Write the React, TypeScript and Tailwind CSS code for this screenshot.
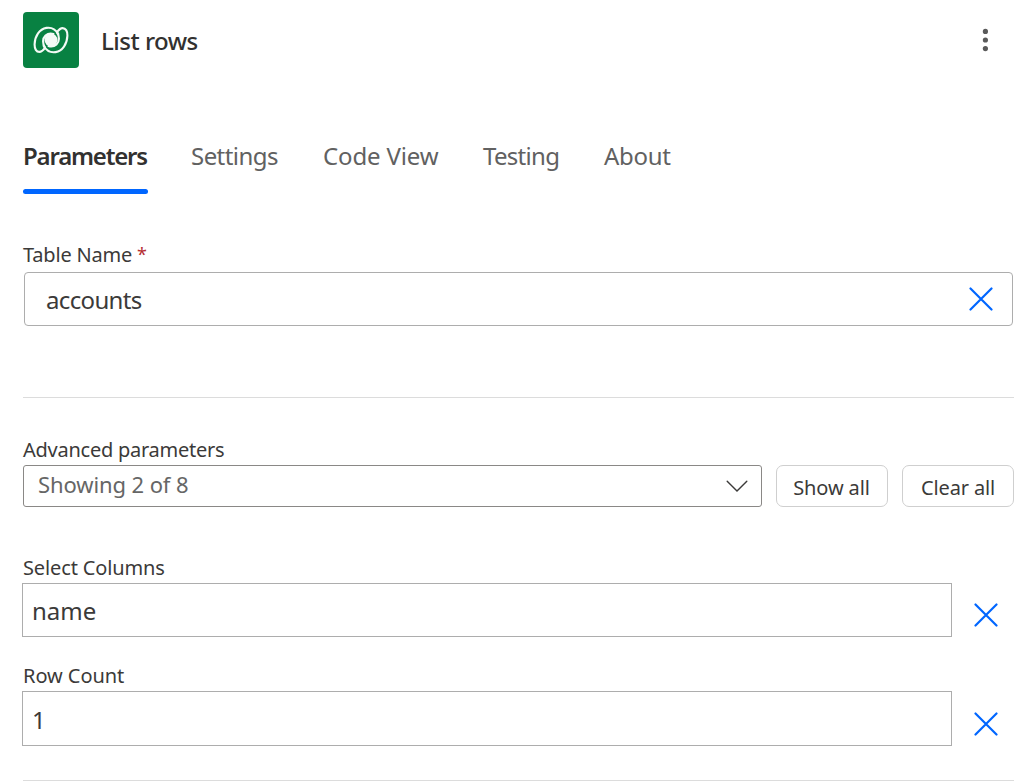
import React from "react";

function CloseIcon() {
  return (
    <svg width="24" height="24" viewBox="0 0 24 24" fill="none" stroke="#0066ff" strokeWidth="2.2" strokeLinecap="round">
      <path d="M1.5 1.5 22.5 22.5M22.5 1.5 1.5 22.5" />
    </svg>
  );
}

function ConnectorLogo() {
  return (
    <div className="flex h-14 w-14 items-center justify-center rounded bg-[#088142]">
      <svg width="36" height="28" viewBox="0 0 36 28" fill="none" stroke="#f4faf6" strokeWidth="2.1" strokeLinecap="round" strokeLinejoin="round">
        <path d="M25.3 8C22.5 3.2 18 1.2 13.4 1.9C6.5 3 1.9 10 1.6 18.2C1.5 23 3.3 25.9 6.4 25.9C9 25.9 10.3 24.2 12 21.9" />
        <path d="M10.7 20C13.5 24.8 18 26.8 22.6 26.1C29.5 25 34.1 18 34.4 9.8C34.5 5 32.7 2.1 29.6 2.1C27 2.1 25.7 3.8 24 6.1" />
        <path d="M12 21.7C9.4 17.8 9.3 12.5 12.5 9.6C15 7.4 18 7.1 20.5 8" />
        <path d="M24 6.3C26.6 10.2 26.7 15.5 23.5 18.4C21 20.6 18 20.9 15.5 20" />
        <circle cx="18" cy="14" r="6.5" fill="#f4faf6" stroke="none" />
      </svg>
    </div>
  );
}

const tabs = [
  { label: "Settings", style: "w-[88px] tracking-[-0.55px]" },
  { label: "Code View", style: "w-[116px] tracking-[-0.15px]" },
  { label: "Testing", style: "w-[77px] tracking-[-0.7px]" },
  { label: "About", style: "w-[68px] tracking-[-0.3px]" },
];

export default function App() {
  return (
    <main className="h-[782px] w-[1022px] overflow-hidden whitespace-nowrap bg-white pl-[23px] font-['Noto_Sans',sans-serif] text-[#3b3a39]">
      <header className="flex items-center pt-3">
        <ConnectorLogo />
        <h1 className="ml-[22px] mt-0.5 text-2xl font-medium leading-8 tracking-[-0.5px] text-[#323130]">List rows</h1>
        <button aria-label="More" className="ml-auto mr-[32px]">
          <svg width="10" height="24" viewBox="0 0 10 24" fill="#5a5a5a">
            <circle cx="5.4" cy="3.4" r="2.6" />
            <circle cx="5.4" cy="12" r="2.6" />
            <circle cx="5.4" cy="20.6" r="2.6" />
          </svg>
        </button>
      </header>

      <nav className="mt-[72px] flex items-start gap-[44px] text-2xl leading-8 text-[#616161]">
        <div className="-mr-px h-[54px] w-[125px]">
          <div className="h-[49px] font-semibold tracking-[-1.2px] text-[#323130]">Parameters</div>
          <div className="h-[5px] rounded-full bg-[#0066ff]" />
        </div>
        {tabs.map((tab) => (
          <div key={tab.label} className={tab.style}>{tab.label}</div>
        ))}
      </nav>

      <section className="mt-[47px]">
        <div className="flex h-[31px] gap-[5px] text-xl leading-7">
          <span className="tracking-[-0.2px]">Table Name</span>
          <span className="text-lg leading-[26px] text-[#b52e31]">*</span>
        </div>
        <div className="ml-px flex h-[54px] w-[989px] items-center justify-between rounded border border-[#adadad] pl-[21px] pr-[19.5px]">
          <span className="pt-0.5 text-2xl tracking-[-0.65px]">accounts</span>
          <CloseIcon />
        </div>
      </section>

      <hr className="mt-[71px] w-[991px] border-t border-[#dcdcdc]" />

      <section className="mt-[38px]">
        <div className="h-[29px] text-xl leading-7 tracking-[-0.25px]">Advanced parameters</div>
        <div className="flex">
          <div className="flex h-[42px] w-[739px] items-center justify-between rounded-[3px] border border-[#8a8886] pl-3.5 pr-[13px]">
            <span className="pb-1 text-[22px] leading-7 tracking-[-0.1px] text-[#666666]">Showing 2 of 8</span>
            <svg width="22" height="12" viewBox="0 0 22 12" fill="none" stroke="#3b3a39" strokeWidth="1.4" strokeLinecap="round">
              <path d="m1.2 1.2 9.8 9.8 9.8-9.8" />
            </svg>
          </div>
          <button className="ml-3.5 h-[42px] w-28 rounded-[7px] border border-[#cfcfcf] pr-px pt-[3px] text-xl tracking-[-0.1px]">Show all</button>
          <button className="ml-3.5 h-[42px] w-28 rounded-[7px] border border-[#cfcfcf] pt-[3px] text-xl tracking-[-0.15px]">Clear all</button>
        </div>
      </section>

      <section className="mt-[47px]">
        <div className="h-[29px] text-xl leading-7 tracking-[-0.13px]">Select Columns</div>
        <div className="-ml-px flex items-center">
          <div className="flex h-[54px] w-[930px] items-center border border-[#adadad] pl-[9px] pt-0.5 text-2xl">name</div>
          <div className="ml-[21.5px] mt-2.5"><CloseIcon /></div>
        </div>
      </section>

      <section className="mt-[25px]">
        <div className="h-[29px] text-xl leading-7 tracking-[-0.05px]">Row Count</div>
        <div className="-ml-px flex items-center">
          <div className="flex h-[55px] w-[930px] items-center border border-[#adadad] pl-[9px] pt-0.5 text-2xl">1</div>
          <div className="ml-[21.5px] mt-2.5"><CloseIcon /></div>
        </div>
      </section>
      <hr className="mt-[34px] w-[991px] border-t border-[#dcdcdc]" />
    </main>
  );
}
